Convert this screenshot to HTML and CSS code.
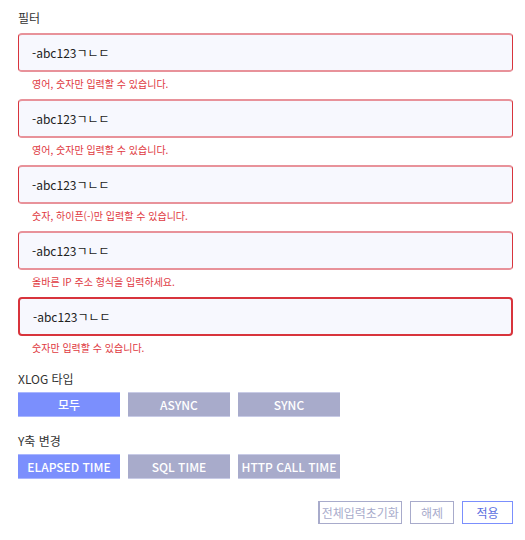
FILE: index.html
```html
<!DOCTYPE html>
<html lang="ko">
<head>
    <meta charset="UTF-8">
    <meta name="viewport" content="width=device-width, initial-scale=1.0">
    <title>필터</title>
    <link rel="stylesheet" href="styles.css">
</head>
<body>

    <!-- Filter form -->
    <div class="filter-panel">
        <div class="section-title">필터</div>

        <div class="field">
            <input type="text" class="text-input invalid" value="-abc123ㄱㄴㄷ">
            <div class="error-msg">영어, 숫자만 입력할 수 있습니다.</div>
        </div>
        <div class="field">
            <input type="text" class="text-input invalid" value="-abc123ㄱㄴㄷ">
            <div class="error-msg">영어, 숫자만 입력할 수 있습니다.</div>
        </div>
        <div class="field">
            <input type="text" class="text-input invalid" value="-abc123ㄱㄴㄷ">
            <div class="error-msg">숫자, 하이픈(-)만 입력할 수 있습니다.</div>
        </div>
        <div class="field">
            <input type="text" class="text-input invalid" value="-abc123ㄱㄴㄷ">
            <div class="error-msg">올바른 IP 주소 형식을 입력하세요.</div>
        </div>
        <div class="field">
            <input type="text" class="text-input invalid focused" value="-abc123ㄱㄴㄷ">
            <div class="error-msg">숫자만 입력할 수 있습니다.</div>
        </div>

        <!-- XLOG type -->
        <div class="group-title">XLOG 타입</div>
        <div class="toggle-row">
            <button class="toggle active">모두</button>
            <button class="toggle">ASYNC</button>
            <button class="toggle">SYNC</button>
        </div>

        <!-- Y axis -->
        <div class="group-title">Y축 변경</div>
        <div class="toggle-row">
            <button class="toggle active">ELAPSED TIME</button>
            <button class="toggle">SQL TIME</button>
            <button class="toggle">HTTP CALL TIME</button>
        </div>

        <!-- Actions -->
        <div class="actions">
            <button class="action-btn reset">전체입력초기화</button>
            <button class="action-btn">해제</button>
            <button class="action-btn apply">적용</button>
        </div>
    </div>

</body>
</html>
```

FILE: styles.css
```css
/* General reset */
* {
    margin: 0;
    padding: 0;
    box-sizing: border-box;
    font-family: "Noto Sans CJK KR", "Noto Sans", sans-serif;
}

body {
    background-color: #ffffff;
    color: #333333;
}

/* Panel */
.filter-panel {
    padding: 10px 12px 0 18px;
}

.section-title {
    font-size: 12px;
    line-height: 16px;
    margin-bottom: 7px;
}

/* Inputs */
.field {
    margin-bottom: 8px;
}

.text-input {
    display: block;
    width: 100%;
    height: 39px;
    padding: 0 13px;
    border-radius: 4px;
    background-color: #f7f8fe;
    font-size: 12px;
    color: #222222;
    outline: none;
}

.text-input.invalid {
    border-style: solid;
    border-width: 2px 1px;
    border-color: #e8929a #d8343c;
}

.text-input.focused {
    border: 2px solid #d8343c;
}

.error-msg {
    margin: 5px 0 0 14px;
    font-size: 10px;
    line-height: 14px;
    color: #e0393f;
}

/* Toggle groups */
.group-title {
    font-size: 12px;
    line-height: 16px;
    margin: 16px 0 5px;
}

.toggle-row {
    display: flex;
    gap: 8px;
}

.toggle {
    width: 102px;
    height: 25px;
    border: none;
    border-top: 1px solid #c8cbe6;
    border-bottom: 1px solid #c8cbe6;
    background-color: #a8abcb;
    color: #ffffff;
    font-size: 12px;
    font-weight: 500;
    cursor: pointer;
}

.toggle.active {
    background-color: #7b8ffd;
    border-color: #a9b6ff;
}

/* Action buttons */
.actions {
    display: flex;
    justify-content: flex-end;
    gap: 8px;
    margin-top: 22px;
}

.action-btn {
    height: 23px;
    padding: 0 10px;
    border: 1px solid #a8abcb;
    background-color: #ffffff;
    color: #a8abcb;
    font-size: 12px;
    cursor: pointer;
}

.action-btn.reset {
    padding: 0 2px;
    border-left-width: 2px;
}

.action-btn.apply {
    width: 51px;
    border-color: #7b8ffd;
    color: #5b6fe0;
}
```
